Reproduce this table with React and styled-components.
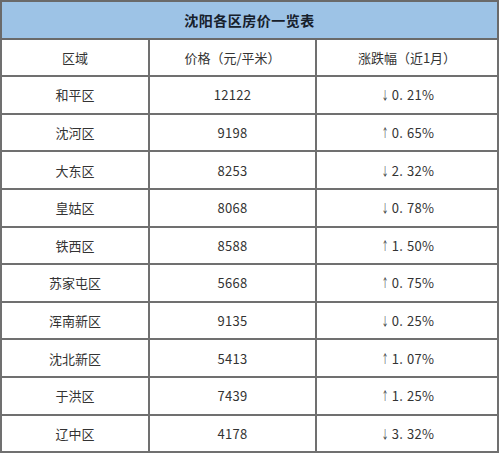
import React from "react";
import styled, { createGlobalStyle } from "styled-components";

const GlobalStyle = createGlobalStyle`
  html, body {
    margin: 0;
    padding: 0;
    background: #ffffff;
  }
`;

const rows = [
  { area: "和平区", price: "12122", up: false, rate: "0.21%" },
  { area: "沈河区", price: "9198", up: true, rate: "0.65%" },
  { area: "大东区", price: "8253", up: false, rate: "2.32%" },
  { area: "皇姑区", price: "8068", up: false, rate: "0.78%" },
  { area: "铁西区", price: "8588", up: true, rate: "1.50%" },
  { area: "苏家屯区", price: "5668", up: true, rate: "0.75%" },
  { area: "浑南新区", price: "9135", up: false, rate: "0.25%" },
  { area: "沈北新区", price: "5413", up: true, rate: "1.07%" },
  { area: "于洪区", price: "7439", up: true, rate: "1.25%" },
  { area: "辽中区", price: "4178", up: false, rate: "3.32%" },
];

const Rate = ({ up, value }) => {
  const [whole, frac] = value.split(".");
  return (
    <>
      <Arrow>{up ? "↑" : "↓"}</Arrow>
      {whole}
      <Dot>.</Dot>
      {frac}
    </>
  );
};

const App = () => {
  return (
    <>
      <GlobalStyle />
      <Table>
        <colgroup>
          <col style={{ width: 148 }} />
          <col style={{ width: 167 }} />
          <col style={{ width: 182 }} />
        </colgroup>
        <thead>
          <tr>
            <Title colSpan={3}>沈阳各区房价一览表</Title>
          </tr>
          <tr>
            <Cell>区域</Cell>
            <Cell>价格（元/平米）</Cell>
            <Cell>涨跌幅（近1月）</Cell>
          </tr>
        </thead>
        <tbody>
          {rows.map((r) => (
            <tr key={r.area}>
              <Cell>{r.area}</Cell>
              <Cell $num>{r.price}</Cell>
              <Cell $num>
                <Rate up={r.up} value={r.rate} />
              </Cell>
            </tr>
          ))}
        </tbody>
      </Table>
    </>
  );
};

const Table = styled.table`
  width: 497px;
  table-layout: fixed;
  border-collapse: collapse;
  font-family: "Noto Sans CJK SC", sans-serif;
`;

const Title = styled.th`
  height: 35.6px;
  padding: 0;
  background: #9dc3e6;
  border: 2px solid #6a6a6a;
  color: #16202b;
  font-size: 14px;
  font-weight: 700;
  letter-spacing: 0.5px;
  text-align: center;
`;

const Cell = styled.td`
  height: 35.6px;
  padding: 0;
  border: 2px solid #707070;
  color: #333333;
  font-size: 13px;
  font-family: "Noto Sans CJK SC", sans-serif;
  letter-spacing: ${(p) => (p.$num ? "0.3px" : "0")};
  text-align: center;
  white-space: nowrap;
`;

const Arrow = styled.span`
  display: inline-block;
  margin-right: 5px;
  font-size: 12px;
  transform: scaleX(0.6);
  width: 7px;
`;

const Dot = styled.span`
  margin-right: 4px;
`;

export default App;
